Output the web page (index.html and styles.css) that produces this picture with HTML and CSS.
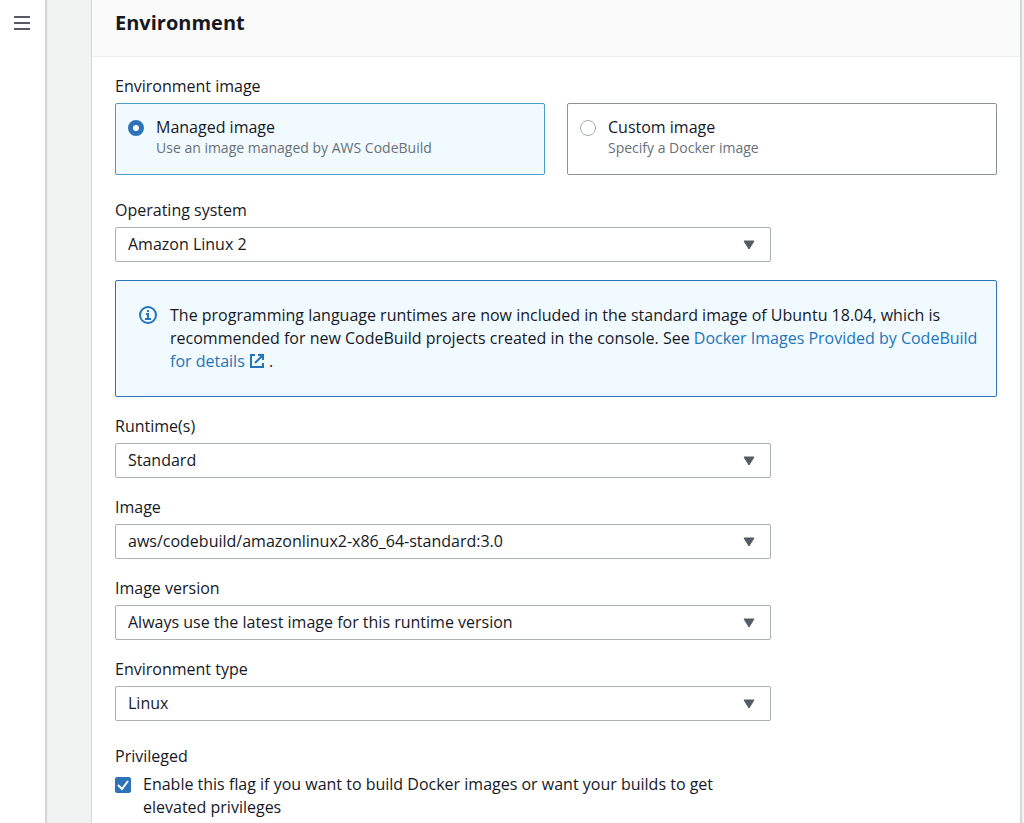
FILE: index.html
```
<!DOCTYPE html>
<html lang="en">
<head>
    <meta charset="UTF-8">
    <meta name="viewport" content="width=device-width, initial-scale=1.0">
    <title>Create build project</title>
    <link rel="stylesheet" href="styles.css">
</head>
<body>
    <nav class="sidebar">
        <button type="button" class="menu-btn" aria-label="Open navigation">
            <svg width="16" height="16" viewBox="0 0 16 16" fill="none" stroke="#545b64" stroke-width="2">
                <path d="M0 2h16M0 8h16M0 14h16"/>
            </svg>
        </button>
    </nav>
    <main>
        <form class="card">
            <header class="card-header">
                <h2>Environment</h2>
            </header>
            <div class="card-body">
                <fieldset class="field tiles-field">
                    <legend>Environment image</legend>
                    <div class="tiles">
                        <label class="tile">
                            <input type="radio" name="envImage" value="managed" checked>
                            <span class="tile-text">
                                <span class="tile-title">Managed image</span>
                                <span class="tile-desc">Use an image managed by AWS CodeBuild</span>
                            </span>
                        </label>
                        <label class="tile">
                            <input type="radio" name="envImage" value="custom">
                            <span class="tile-text">
                                <span class="tile-title">Custom image</span>
                                <span class="tile-desc">Specify a Docker image</span>
                            </span>
                        </label>
                    </div>
                </fieldset>

                <div class="field">
                    <label class="field-label" for="os">Operating system</label>
                    <div class="select">
                        <select id="os">
                            <option>Amazon Linux 2</option>
                        </select>
                        <svg width="12" height="10" viewBox="0 0 12 10"><path d="M1 1h10L6 9z"/></svg>
                    </div>
                </div>

                <div class="info">
                    <svg class="info-icon" width="20" height="20" viewBox="0 0 20 20" fill="none" stroke="#2374bb" stroke-width="2">
                        <circle cx="10" cy="10" r="8"/>
                        <path d="M10 5v2M8 9h2v5M7 14h6"/>
                    </svg>
                    <p>The programming language runtimes are now included in the standard image of Ubuntu 18.04, which is recommended for new CodeBuild projects created in the console. See <a href="#">Docker Images Provided by CodeBuild for details <svg class="ext-icon" width="16" height="16" viewBox="0 0 16 16" fill="none" stroke="#2374bb" stroke-width="2"><path d="M6 2H2v12h12v-4M9 2h5v5M14 2L6 10"/></svg></a> .</p>
                </div>

                <div class="field">
                    <label class="field-label" for="runtime">Runtime(s)</label>
                    <div class="select">
                        <select id="runtime">
                            <option>Standard</option>
                        </select>
                        <svg width="12" height="10" viewBox="0 0 12 10"><path d="M1 1h10L6 9z"/></svg>
                    </div>
                </div>

                <div class="field">
                    <label class="field-label" for="image">Image</label>
                    <div class="select">
                        <select id="image">
                            <option>aws/codebuild/amazonlinux2-x86_64-standard:3.0</option>
                        </select>
                        <svg width="12" height="10" viewBox="0 0 12 10"><path d="M1 1h10L6 9z"/></svg>
                    </div>
                </div>

                <div class="field">
                    <label class="field-label" for="version">Image version</label>
                    <div class="select">
                        <select id="version">
                            <option>Always use the latest image for this runtime version</option>
                        </select>
                        <svg width="12" height="10" viewBox="0 0 12 10"><path d="M1 1h10L6 9z"/></svg>
                    </div>
                </div>

                <div class="field">
                    <label class="field-label" for="envType">Environment type</label>
                    <div class="select">
                        <select id="envType">
                            <option>Linux</option>
                        </select>
                        <svg width="12" height="10" viewBox="0 0 12 10"><path d="M1 1h10L6 9z"/></svg>
                    </div>
                </div>

                <fieldset class="privileged">
                    <legend>Privileged</legend>
                    <label class="check">
                        <span class="check-box">
                            <input type="checkbox" checked>
                            <svg width="16" height="16" viewBox="0 0 16 16" fill="none" stroke="#fff" stroke-width="2"><path d="M3 8l4 4 6-8"/></svg>
                        </span>
                        <span>Enable this flag if you want to build Docker images or want your builds to get elevated privileges</span>
                    </label>
                </fieldset>
            </div>
        </form>
    </main>
</body>
</html>
```

FILE: styles.css
```
* {
    box-sizing: border-box;
}
body {
    margin: 0;
    min-height: 100vh;
    display: flex;
    background-color: #f1f2f2;
    font-family: "Open Sans", "Noto Sans", sans-serif;
    font-size: 16px;
    line-height: 23px;
    color: #16191f;
}
.sidebar {
    width: 46px;
    flex-shrink: 0;
    padding-left: 14px;
    background-color: #fff;
    border-right: 1px solid #d0d2d2;
    box-shadow: 1px 0 1px rgba(0, 0, 0, 0.1);
}
.menu-btn {
    margin-top: 15px;
    padding: 0;
    width: 16px;
    height: 16px;
    border: none;
    background: none;
    cursor: pointer;
}
.menu-btn svg {
    display: block;
}
main {
    flex: 1;
    min-width: 0;
    padding: 0 2px 0 45px;
}
.card {
    min-height: 100vh;
    background-color: #fff;
    border: solid #d5d8d8;
    border-width: 0 2px 0 1px;
}
.card-header {
    padding: 8px 23px 18px;
    background-color: #fafafa;
    border-bottom: 1px solid #eaeded;
}
h2 {
    margin: 0;
    font-size: 20px;
    line-height: 30px;
    font-weight: 700;
}
.card-body {
    padding: 18px 23px 0;
}
fieldset {
    min-width: 0;
    padding: 0;
    border: none;
    margin: 0;
}
legend {
    padding: 0;
    margin-bottom: 5px;
}
.field {
    margin-bottom: 18px;
}
.field-label {
    display: block;
    margin-bottom: 5px;
}
.tiles-field {
    margin-bottom: 24px;
}
.tiles {
    display: grid;
    grid-template-columns: 1fr 1fr;
    gap: 22px;
}
.tile {
    display: flex;
    gap: 12px;
    min-height: 72px;
    padding: 12px;
    border: 1px solid #8d9296;
    border-radius: 2px;
    cursor: pointer;
}
.tile:has(input:checked) {
    background-color: #f1faff;
    border-color: #4a9cc9;
}
.tile input {
    appearance: none;
    flex-shrink: 0;
    width: 16px;
    height: 16px;
    margin: 4px 0 0;
    border: 1px solid #a5abad;
    border-radius: 50%;
    background-color: #fff;
}
.tile input:checked {
    border: 5px solid #2e73b8;
}
.tile-text {
    display: flex;
    flex-direction: column;
}
.tile-title {
    font-weight: 500;
}
.tile-desc {
    font-size: 14px;
    line-height: 18px;
    color: #687078;
}
.select {
    position: relative;
    width: calc(75% - 6px);
}
.select select {
    appearance: none;
    display: block;
    width: 100%;
    height: 35px;
    padding: 0 40px 0 12px;
    border: 1px solid #aab0b2;
    border-radius: 2px;
    background-color: #fff;
    font: inherit;
    font-weight: 500;
    color: inherit;
}
.select svg {
    position: absolute;
    right: 16px;
    top: 13px;
    fill: #545b64;
    stroke: #545b64;
    stroke-linejoin: round;
    pointer-events: none;
}
.info {
    display: flex;
    gap: 12px;
    margin-bottom: 18px;
    padding: 23px 12px 23px 22px;
    border: 1px solid #2e73b8;
    border-radius: 2px;
    background-color: #f1faff;
}
.info-icon {
    flex-shrink: 0;
    margin-top: 1px;
}
.info p {
    margin: 0;
}
a {
    color: #2374bb;
    text-decoration: none;
}
a:hover {
    text-decoration: underline;
}
.ext-icon {
    vertical-align: -2px;
}
.privileged {
    margin-top: 24px;
}
.check {
    display: flex;
    gap: 12px;
    width: calc(75% - 6px);
    padding-right: 32px;
}
.check-box {
    position: relative;
    flex-shrink: 0;
    width: 16px;
    height: 16px;
    margin-top: 4px;
}
.check-box input {
    appearance: none;
    display: block;
    width: 16px;
    height: 16px;
    margin: 0;
    border: 1px solid #aab0b2;
    border-radius: 2px;
}
.check-box input:checked {
    background-color: #2e73b8;
    border-color: #2e73b8;
}
.check-box svg {
    position: absolute;
    left: 0;
    top: 0;
    pointer-events: none;
}
```
